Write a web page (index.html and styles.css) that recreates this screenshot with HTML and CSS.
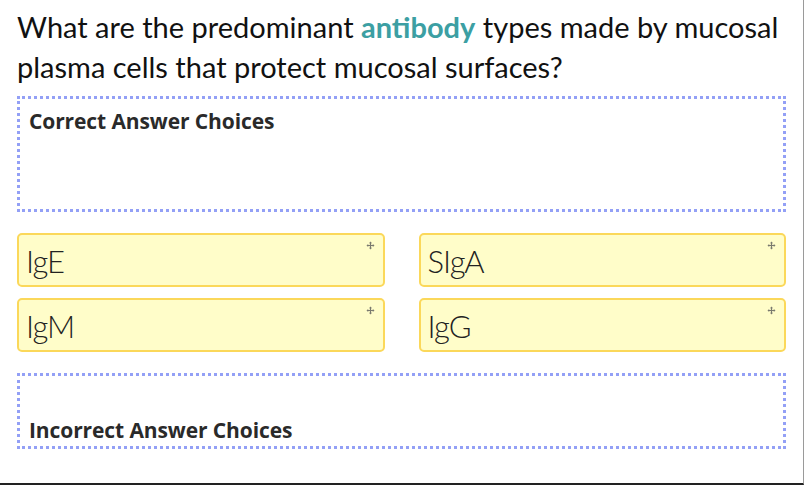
FILE: index.html
```html
<!DOCTYPE html>
<html lang="en">
<head>
<meta charset="utf-8">
<link rel="stylesheet" href="styles.css">
</head>
<body>
<div class="page">
  <h1 class="question">What are the predominant <span class="key">antibody</span> types made by mucosal plasma cells that protect mucosal surfaces?</h1>
  <section class="zone zone-correct">
    <h2 class="zone-title">Correct Answer Choices</h2>
  </section>
  <div class="choices">
    <div class="card"><span class="label">IgE</span><svg class="move" viewBox="0 0 9 9"><path d="M4.5 0.5 L6 2.2 H5.1 V3.9 H6.8 V3 L8.5 4.5 L6.8 6 V5.1 H5.1 V6.8 H6 L4.5 8.5 L3 6.8 H3.9 V5.1 H2.2 V6 L0.5 4.5 L2.2 3 V3.9 H3.9 V2.2 H3 Z"/></svg></div>
    <div class="card"><span class="label">SIgA</span><svg class="move" viewBox="0 0 9 9"><path d="M4.5 0.5 L6 2.2 H5.1 V3.9 H6.8 V3 L8.5 4.5 L6.8 6 V5.1 H5.1 V6.8 H6 L4.5 8.5 L3 6.8 H3.9 V5.1 H2.2 V6 L0.5 4.5 L2.2 3 V3.9 H3.9 V2.2 H3 Z"/></svg></div>
    <div class="card"><span class="label">IgM</span><svg class="move" viewBox="0 0 9 9"><path d="M4.5 0.5 L6 2.2 H5.1 V3.9 H6.8 V3 L8.5 4.5 L6.8 6 V5.1 H5.1 V6.8 H6 L4.5 8.5 L3 6.8 H3.9 V5.1 H2.2 V6 L0.5 4.5 L2.2 3 V3.9 H3.9 V2.2 H3 Z"/></svg></div>
    <div class="card"><span class="label">IgG</span><svg class="move" viewBox="0 0 9 9"><path d="M4.5 0.5 L6 2.2 H5.1 V3.9 H6.8 V3 L8.5 4.5 L6.8 6 V5.1 H5.1 V6.8 H6 L4.5 8.5 L3 6.8 H3.9 V5.1 H2.2 V6 L0.5 4.5 L2.2 3 V3.9 H3.9 V2.2 H3 Z"/></svg></div>
  </div>
  <section class="zone zone-incorrect">
    <h2 class="zone-title">Incorrect Answer Choices</h2>
  </section>
</div>
</body>
</html>
```
FILE: styles.css
```css
html, body {
  margin: 0;
  padding: 0;
  background: #ffffff;
}
body {
  width: 804px;
  height: 485px;
  box-sizing: border-box;
  border-right: 1px solid #9a9a9a;
  border-bottom: 2px solid #222222;
  overflow: hidden;
  font-family: Lato, "Open Sans", sans-serif;
  color: #111111;
}
.page {
  padding: 7px 17px 0 17px;
}
.question {
  margin: 0;
  font-size: 29px;
  font-weight: 400;
  line-height: 40px;
  color: #111111;
}
.key {
  color: #3c9fa3;
  font-weight: 700;
}
.zone {
  border: 3px dotted #93a0f6;
  box-sizing: border-box;
}
.zone-correct {
  margin-top: 9px;
  height: 116px;
  padding: 8px 9px;
}
.zone-title {
  margin: 0;
  font-family: "Open Sans", Lato, sans-serif;
  font-size: 21px;
  font-weight: 700;
  line-height: 28px;
  letter-spacing: -0.1px;
  color: #2a2a2a;
}
.choices {
  margin-top: 21px;
  display: grid;
  grid-template-columns: 1fr 1fr;
  column-gap: 34px;
  row-gap: 11px;
}
.card {
  position: relative;
  height: 54px;
  box-sizing: border-box;
  background: #fffdc9;
  border: 2px solid #fbd85a;
  border-radius: 5px;
  display: flex;
  align-items: center;
  padding: 1px 8px 0 7px;
}
.label {
  font-size: 31px;
  font-weight: 300;
  letter-spacing: -1px;
  color: #222222;
}
.move {
  position: absolute;
  top: 6px;
  right: 8px;
  width: 9px;
  height: 9px;
  fill: #7a7a6e;
}
.zone-incorrect {
  margin-top: 21px;
  height: 76px;
  padding: 40px 9px 0 9px;
}
```
